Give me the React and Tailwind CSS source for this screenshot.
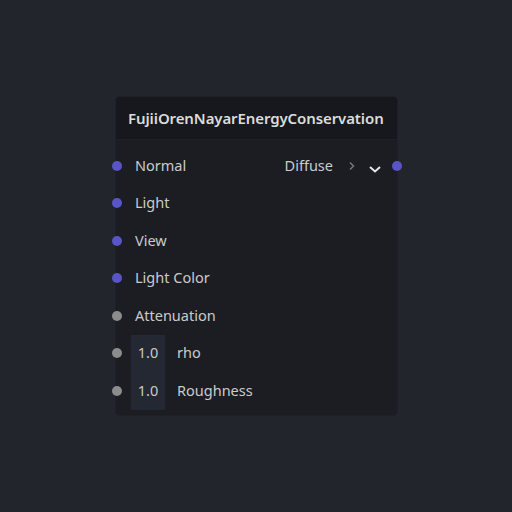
import React from 'react';

const inputs = [
  { label: 'Normal', color: 'purple' },
  { label: 'Light', color: 'purple' },
  { label: 'View', color: 'purple' },
  { label: 'Light Color', color: 'purple' },
  { label: 'Attenuation', color: 'gray' },
  { label: 'rho', color: 'gray', value: '1.0' },
  { label: 'Roughness', color: 'gray', value: '1.0' },
];

const Dot = ({ color, side }) => (
  <span
    className={`absolute top-1/2 -translate-y-1/2 w-[10px] h-[10px] rounded-full ${
      color === 'purple' ? 'bg-[#5a55c6]' : 'bg-[#8c8c8c]'
    } ${side === 'right' ? 'right-[-5px]' : 'left-[-4px]'}`}
  />
);

export default function App() {
  return (
    <div
      className="min-h-screen w-full bg-[#22252c] pt-[97px] pl-[116px] text-[#cbcbcb]"
      style={{ fontFamily: '"Noto Sans", "Open Sans", sans-serif' }}
    >
      <div className="w-[281px] rounded-[4px] bg-[#1b1d23] shadow-[0_0_0_1px_#1e2027]">
        {/* Header */}
        <div className="h-[43px] flex items-center pl-[12px] rounded-t-[4px] bg-[#17181d] border-b border-[#1f2128]">
          <span className="text-[15px] font-semibold text-[#dcdcdc] tracking-[-0.1px]">
            FujiiOrenNayarEnergyConservation
          </span>
        </div>

        {/* Body */}
        <div className="pt-[7px] pb-[5px]">
          {inputs.map((row, i) => (
            <div key={row.label} className="relative h-[37.5px] flex items-center">
              <Dot color={row.color} side="left" />
              {row.value ? (
                <>
                  <div className="ml-[15px] w-[34px] h-full bg-[#232833] flex items-center justify-center text-[14.5px]">
                    {row.value}
                  </div>
                  <span className="ml-[12px] text-[14.5px]">{row.label}</span>
                </>
              ) : (
                <span className="ml-[19px] text-[14.5px]">{row.label}</span>
              )}
              {i === 0 && (
                <div className="ml-auto flex items-center">
                  <span className="text-[14.5px]">Diffuse</span>
                  <svg className="ml-[15px]" width="8" height="10" viewBox="0 0 8 10">
                    <path d="M2 1.5 L5.5 5 L2 8.5" fill="none" stroke="#777" strokeWidth="1.5" />
                  </svg>
                  <svg className="ml-[12px] mr-[15px] mt-[6px]" width="14" height="10" viewBox="0 0 14 10">
                    <path d="M2 3 L7 7.5 L12 3" fill="none" stroke="#e6e6e6" strokeWidth="2" />
                  </svg>
                  <Dot color="purple" side="right" />
                </div>
              )}
            </div>
          ))}
        </div>
      </div>
    </div>
  );
}
